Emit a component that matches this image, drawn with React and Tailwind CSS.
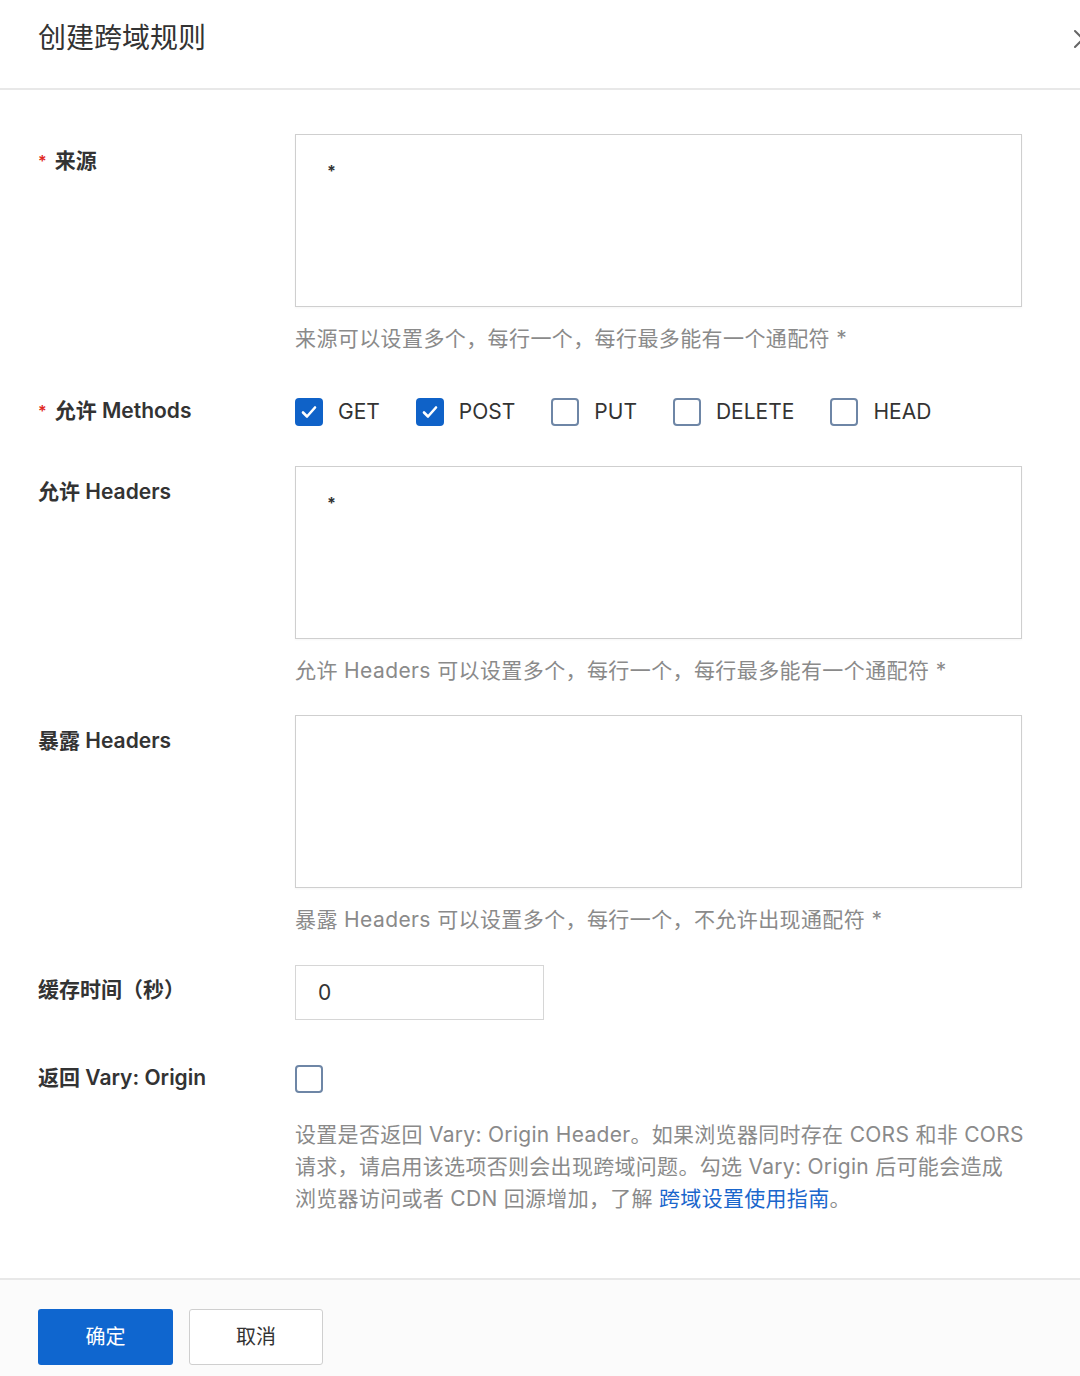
import React from "react";

const font = { fontFamily: 'Inter, "Noto Sans CJK SC", sans-serif' };

function Check({ checked }) {
  return checked ? (
    <span className="flex h-[28px] w-[28px] items-center justify-center rounded-[4px] bg-[#0f62c8]">
      <svg width="20" height="20" viewBox="0 0 20 20" fill="none">
        <path d="M4 10.5l4 4 8-9" stroke="white" strokeWidth="2.6" strokeLinecap="round" strokeLinejoin="round" />
      </svg>
    </span>
  ) : (
    <span className="block h-[28px] w-[28px] rounded-[4px] border-2 border-[#6e86a6] bg-white" />
  );
}

function Label({ children, required, className = "" }) {
  return (
    <div className={"w-[257px] shrink-0 text-[21px] font-semibold leading-[30px] text-[#333] " + className}>
      {required && <span className="mr-[8px] align-top text-[16px] text-[#e0281f]">*</span>}
      {children}
    </div>
  );
}

function Area({ value }) {
  return (
    <div className="h-[173px] w-[727px] border-[1.5px] border-[#cfcfcf] bg-white px-[31px] pt-[21px] text-[16px] font-bold leading-[30px] text-[#333] shadow-[0_1px_2px_rgba(0,0,0,0.04)]">
      {value}
    </div>
  );
}

function Help({ children, className = "" }) {
  return <div className={"text-[21px] leading-[30px] tracking-[0.4px] text-[#8a8a8a] " + className}>{children}</div>;
}

export default function App() {
  const methods = [
    ["GET", true],
    ["POST", true],
    ["PUT", false],
    ["DELETE", false],
    ["HEAD", false],
  ];
  return (
    <div style={font} className="flex min-h-[1376px] w-[1080px] flex-col bg-white">
      <div className="flex h-[90px] shrink-0 items-start justify-between overflow-hidden border-b-2 border-[#e8e8e8] pl-[38px] pt-[18px]">
        <div className="text-[28px] leading-[40px] text-[#333]">创建跨域规则</div>
        <svg className="mr-[-14px] mt-[10px]" width="22" height="22" viewBox="0 0 22 22" fill="none">
          <path d="M3 3l16 16M19 3L3 19" stroke="#666" strokeWidth="2" strokeLinecap="round" />
        </svg>
      </div>

      <div className="flex-1 pl-[38px]">
        <div className="mt-[44px] flex">
          <Label required className="mt-[12px]">来源</Label>
          <div>
            <Area value="*" />
            <Help className="mt-[17px]">来源可以设置多个，每行一个，每行最多能有一个通配符 *</Help>
          </div>
        </div>

        <div className="mt-[44px] flex h-[28px] items-center">
          <Label required className="mt-[-3px]">允许 Methods</Label>
          <div className="flex items-center gap-[36px]">
            {methods.map(([m, c]) => (
              <div key={m} className="flex items-center gap-[15px]">
                <Check checked={c} />
                <span className="text-[21px] leading-[30px] text-[#333]">{m}</span>
              </div>
            ))}
          </div>
        </div>

        <div className="mt-[40px] flex">
          <Label className="mt-[11px]">允许 Headers</Label>
          <div>
            <Area value="*" />
            <Help className="mt-[17px]">允许 Headers 可以设置多个，每行一个，每行最多能有一个通配符 *</Help>
          </div>
        </div>

        <div className="mt-[29px] flex">
          <Label className="mt-[11px]">暴露 Headers</Label>
          <div>
            <Area value="" />
            <Help className="mt-[17px]">暴露 Headers 可以设置多个，每行一个，不允许出现通配符 *</Help>
          </div>
        </div>

        <div className="mt-[30px] flex">
          <Label className="mt-[10px]">缓存时间（秒）</Label>
          <div className="flex h-[55px] w-[249px] items-center border-[1.5px] border-[#d6d6d6] bg-white pl-[22px] text-[21px] text-[#333]">
            0
          </div>
        </div>

        <div className="mt-[45px] flex">
          <Label className="mt-[-2px]">返回 Vary: Origin</Label>
          <div>
            <Check checked={false} />
            <div className="mt-[26px] w-[770px] text-[21px] leading-[32px] tracking-[0.3px] text-[#8a8a8a]">
              设置是否返回 Vary: Origin Header。如果浏览器同时存在 CORS 和非 CORS
              <br />
              请求，请启用该选项否则会出现跨域问题。勾选 Vary: Origin 后可能会造成
              <br />
              浏览器访问或者 CDN 回源增加，了解 <span className="text-[#1a66cc]">跨域设置使用指南</span>。
            </div>
          </div>
        </div>
      </div>

      <div className="mt-[62px] flex h-[98px] shrink-0 gap-[16px] border-t-2 border-[#e8e8e8] bg-[#fbfbfb] pl-[38px] pt-[29px]">
        <button className="h-[56px] w-[135px] rounded-[3px] bg-[#0f66cf] text-[20px] text-white">确定</button>
        <button className="h-[56px] w-[134px] rounded-[3px] border-[1.5px] border-[#cfcfcf] bg-white text-[20px] text-[#333]">取消</button>
      </div>
    </div>
  );
}
